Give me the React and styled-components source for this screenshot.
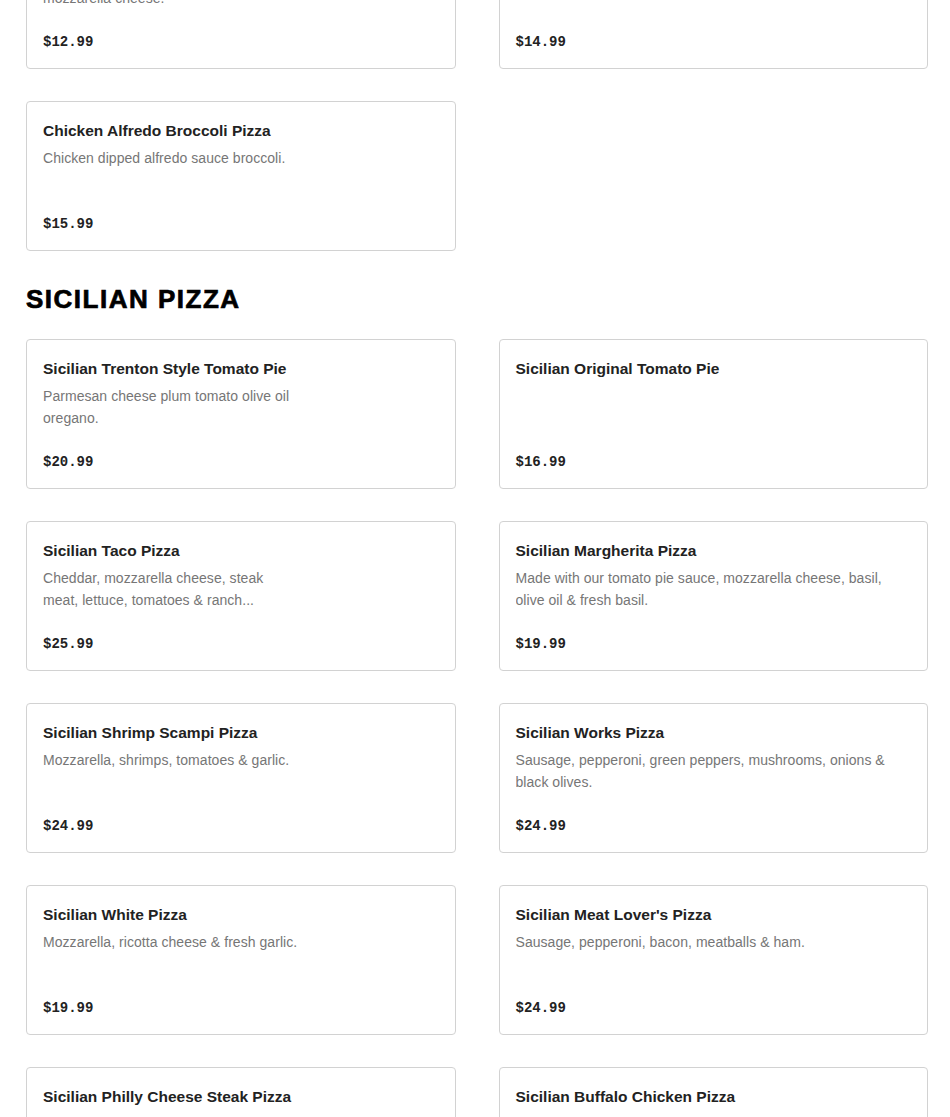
import React from 'react';
import styled, { createGlobalStyle } from 'styled-components';

const GlobalStyle = createGlobalStyle`
  html, body {
    margin: 0;
    padding: 0;
    background: #ffffff;
    overflow: hidden;
  }
  body {
    font-family: "Liberation Sans", Arial, sans-serif;
    color: #222222;
  }
`;

// Page holds all menu sections, scrolled so the first row is cut at the top
const Page = styled.main`
  padding: 0 22px 0 26px;
  margin-top: -81px;
`;

const Section = styled.section`
  & + & {
    margin-top: 32px;
  }
`;

const SectionTitle = styled.h2`
  margin: 0 0 24px;
  font-family: "Liberation Sans", Arial, sans-serif;
  font-size: 26px;
  line-height: 32px;
  font-weight: 900;
  letter-spacing: 1.5px;
  -webkit-text-stroke: 0.7px #000000;
  color: #000000;
  text-transform: uppercase;
`;

const Grid = styled.div`
  display: grid;
  grid-template-columns: 1fr 1fr;
  column-gap: 43px;
  row-gap: 32px;
`;

const Card = styled.article`
  box-sizing: border-box;
  height: 150px;
  display: flex;
  flex-direction: column;
  padding: 18px 16px 16px;
  border: 1px solid #d2d2d2;
  border-radius: 4px;
  background: #ffffff;
`;

const ItemName = styled.h3`
  margin: 0 0 5px;
  font-size: 15.5px;
  line-height: 22px;
  font-weight: 700;
  color: #222222;
`;

const ItemDesc = styled.p`
  margin: 0;
  max-width: ${(p) => (p.$narrow ? '257px' : 'none')};
  font-size: 14px;
  line-height: 22px;
  letter-spacing: 0.05px;
  color: #767676;
  display: -webkit-box;
  -webkit-line-clamp: 2;
  -webkit-box-orient: vertical;
  overflow: hidden;
`;

const Price = styled.div`
  margin-top: auto;
  font-family: "Liberation Mono", "Courier New", monospace;
  font-size: 14px;
  line-height: 20px;
  font-weight: 700;
  color: #222222;
`;

const sections = [
  {
    title: null,
    items: [
      { name: 'Buffalo Chicken Pizza', desc: 'Grilled chicken, buffalo sauce, mozzarella cheese.', price: '$12.99' },
      { name: 'Meatball Ricotta Pizza', desc: 'Meatballs, ricotta & mozzarella.', price: '$14.99' },
      { name: 'Chicken Alfredo Broccoli Pizza', desc: 'Chicken dipped alfredo sauce broccoli.', price: '$15.99' },
    ],
  },
  {
    title: 'Sicilian Pizza',
    items: [
      { name: 'Sicilian Trenton Style Tomato Pie', desc: 'Parmesan cheese plum tomato olive oil oregano.', price: '$20.99' },
      { name: 'Sicilian Original Tomato Pie', desc: '', price: '$16.99' },
      { name: 'Sicilian Taco Pizza', desc: 'Cheddar, mozzarella cheese, steak meat, lettuce, tomatoes & ranch...', price: '$25.99' },
      { name: 'Sicilian Margherita Pizza', desc: 'Made with our tomato pie sauce, mozzarella cheese, basil, olive oil & fresh basil.', price: '$19.99' },
      { name: 'Sicilian Shrimp Scampi Pizza', desc: 'Mozzarella, shrimps, tomatoes & garlic.', price: '$24.99' },
      { name: 'Sicilian Works Pizza', desc: 'Sausage, pepperoni, green peppers, mushrooms, onions & black olives.', price: '$24.99' },
      { name: 'Sicilian White Pizza', desc: 'Mozzarella, ricotta cheese & fresh garlic.', price: '$19.99' },
      { name: "Sicilian Meat Lover's Pizza", desc: 'Sausage, pepperoni, bacon, meatballs & ham.', price: '$24.99' },
      { name: 'Sicilian Philly Cheese Steak Pizza', desc: 'Shaved steak, onions, green peppers & american cheese.', price: '$24.99' },
      { name: 'Sicilian Buffalo Chicken Pizza', desc: 'Grilled chicken with buffalo sauce, blue cheese dressing & mozzarella cheese.', price: '$24.99' },
    ],
  },
];

const MenuCard = ({ item, narrow }) => (
  <Card>
    <ItemName>{item.name}</ItemName>
    {item.desc && <ItemDesc $narrow={narrow}>{item.desc}</ItemDesc>}
    <Price>{item.price}</Price>
  </Card>
);

const App = () => (
  <>
    <GlobalStyle />
    <Page>
      {sections.map((section, si) => (
        <Section key={si}>
          {section.title && <SectionTitle>{section.title}</SectionTitle>}
          <Grid>
            {section.items.map((item, i) => (
              <MenuCard key={item.name} item={item} narrow={i % 2 === 0} />
            ))}
          </Grid>
        </Section>
      ))}
    </Page>
  </>
);

export default App;
